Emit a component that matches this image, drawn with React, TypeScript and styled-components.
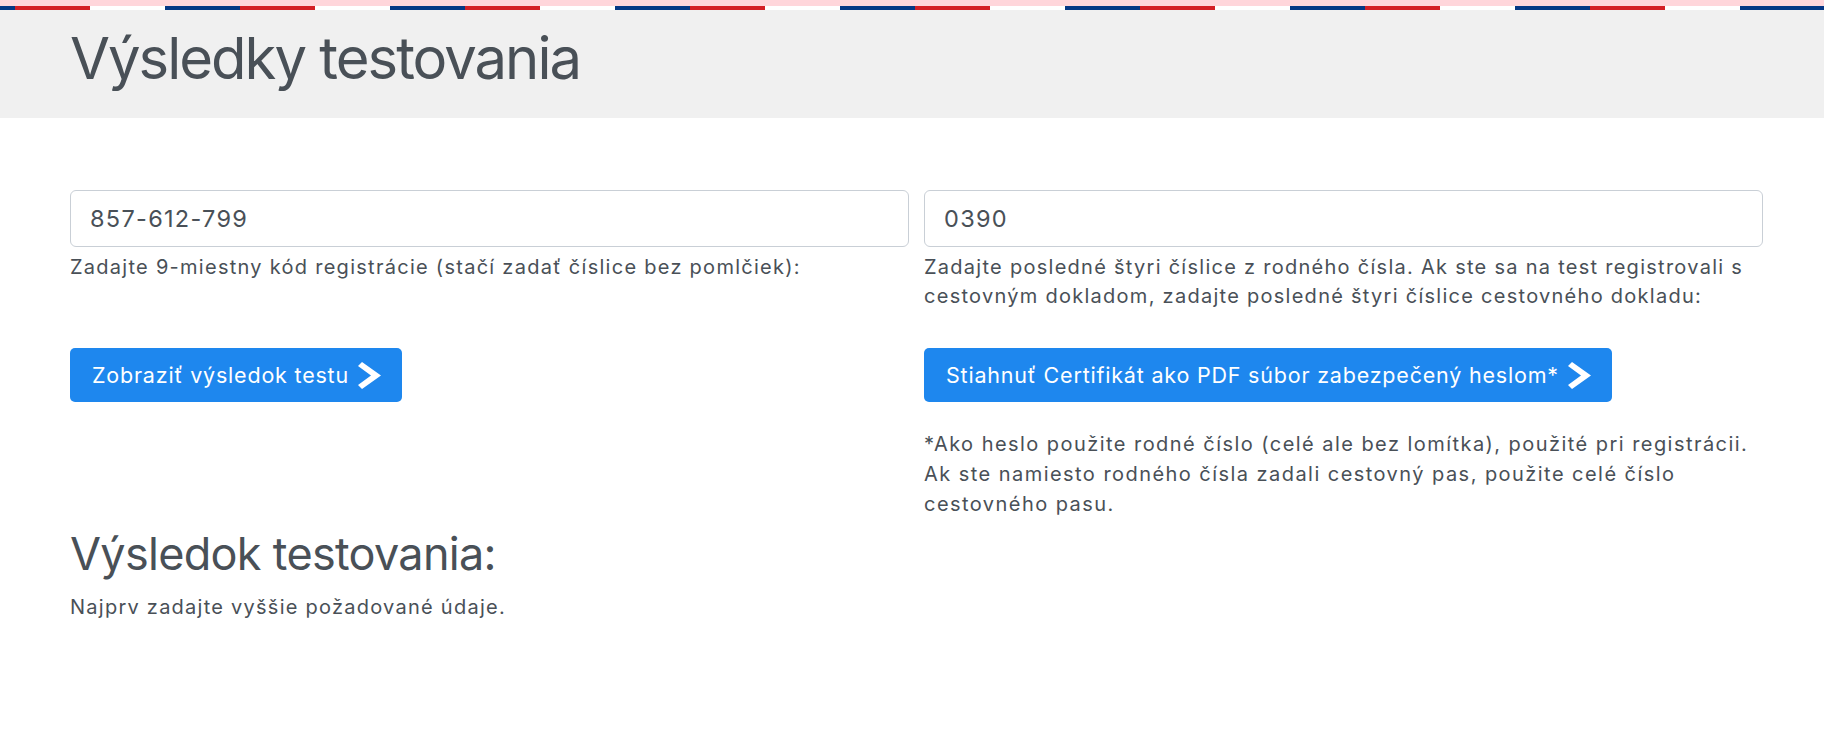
import React from 'react'
import styled, {createGlobalStyle} from 'styled-components'

const Global = createGlobalStyle`
  body{
    margin: 0;
    background: #fff;
    font-family: Inter, "Noto Sans", "Liberation Sans", sans-serif;
    color: #495057;
  }
`

const PinkBand = styled.div`
  height: 6px;
  background: #ffd6db;
`

const FlagStripe = styled.div`
  height: 4px;
  background: repeating-linear-gradient(
    90deg,
    #053784 0px, #053784 75px,
    #d41f25 75px, #d41f25 150px,
    #ffffff 150px, #ffffff 225px
  );
  background-position: -60px 0;
`

const Header = styled.header`
  height: 108px;
  box-sizing: border-box;
  padding: 13px 0 0 70px;
  background: #f0f0f0;
`

const Title = styled.h1`
  margin: 0;
  font-size: 58px;
  font-weight: 400;
  line-height: 1.22;
  letter-spacing: -2px;
  color: #495057;
`

const Main = styled.main`
  padding: 72px 61px 0 70px;
`

const Grid = styled.div`
  display: grid;
  grid-template-columns: 1fr 1fr;
  column-gap: 15px;
  row-gap: 37px;
`

const Field = styled.div`
  display: flex;
  flex-direction: column;
`

const Input = styled.input`
  height: 57px;
  box-sizing: border-box;
  padding: 0 19px;
  border: 1.5px solid #c9cfd6;
  border-radius: 6px;
  font-family: inherit;
  font-size: 23.5px;
  letter-spacing: 1.3px;
  color: #495057;
  outline: none;
`

const Help = styled.div`
  margin-top: 6px;
  font-size: 20px;
  line-height: 29px;
  letter-spacing: 1.27px;
  color: #495057;
`

const ActionCell = styled.div`
  display: flex;
  flex-direction: column;
  align-items: flex-start;
`

const Button = styled.button`
  height: 54px;
  display: inline-flex;
  align-items: center;
  gap: 9px;
  padding: 0 21px 0 22px;
  border: none;
  border-radius: 5px;
  background: #1e87ee;
  color: #fff;
  font-family: inherit;
  font-size: 21.5px;
  letter-spacing: 0.8px;
  cursor: pointer;
`

const Note = styled.p`
  margin: 27px 0 0;
  font-size: 20px;
  line-height: 30px;
  letter-spacing: 1.45px;
`

const SubTitle = styled.h2`
  margin: 8px 0 0;
  font-size: 45px;
  font-weight: 400;
  line-height: 1.2;
  letter-spacing: -0.7px;
`

const Lead = styled.p`
  margin: 12px 0 0;
  font-size: 20px;
  line-height: 29px;
  letter-spacing: 1.25px;
`

const Chevron = () => (
  <svg width="23" height="27" viewBox="0 0 23 27">
    <polygon points="0,4 4,0 23,13.5 4,27 0,23 13,13.5" fill="#fff" />
  </svg>
)

const App: React.FC = () => {
  return (
    <>
      <Global />
      <PinkBand />
      <FlagStripe />
      <Header>
        <Title>Výsledky testovania</Title>
      </Header>
      <Main>
        <Grid>
          <Field>
            <Input defaultValue="857-612-799" />
            <Help>Zadajte 9-miestny kód registrácie (stačí zadať číslice bez pomlčiek):</Help>
          </Field>
          <Field>
            <Input defaultValue="0390" />
            <Help>
              Zadajte posledné štyri číslice z rodného čísla. Ak ste sa na test registrovali s
              <br />
              cestovným dokladom, zadajte posledné štyri číslice cestovného dokladu:
            </Help>
          </Field>
          <ActionCell>
            <Button>Zobraziť výsledok testu <Chevron /></Button>
          </ActionCell>
          <ActionCell>
            <Button>Stiahnuť Certifikát ako PDF súbor zabezpečený heslom* <Chevron /></Button>
            <Note>
              *Ako heslo použite rodné číslo (celé ale bez lomítka), použité pri registrácii.
              <br />
              Ak ste namiesto rodného čísla zadali cestovný pas, použite celé číslo
              <br />
              cestovného pasu.
            </Note>
          </ActionCell>
        </Grid>
        <SubTitle>Výsledok testovania:</SubTitle>
        <Lead>Najprv zadajte vyššie požadované údaje.</Lead>
      </Main>
    </>
  )
}

export default App
